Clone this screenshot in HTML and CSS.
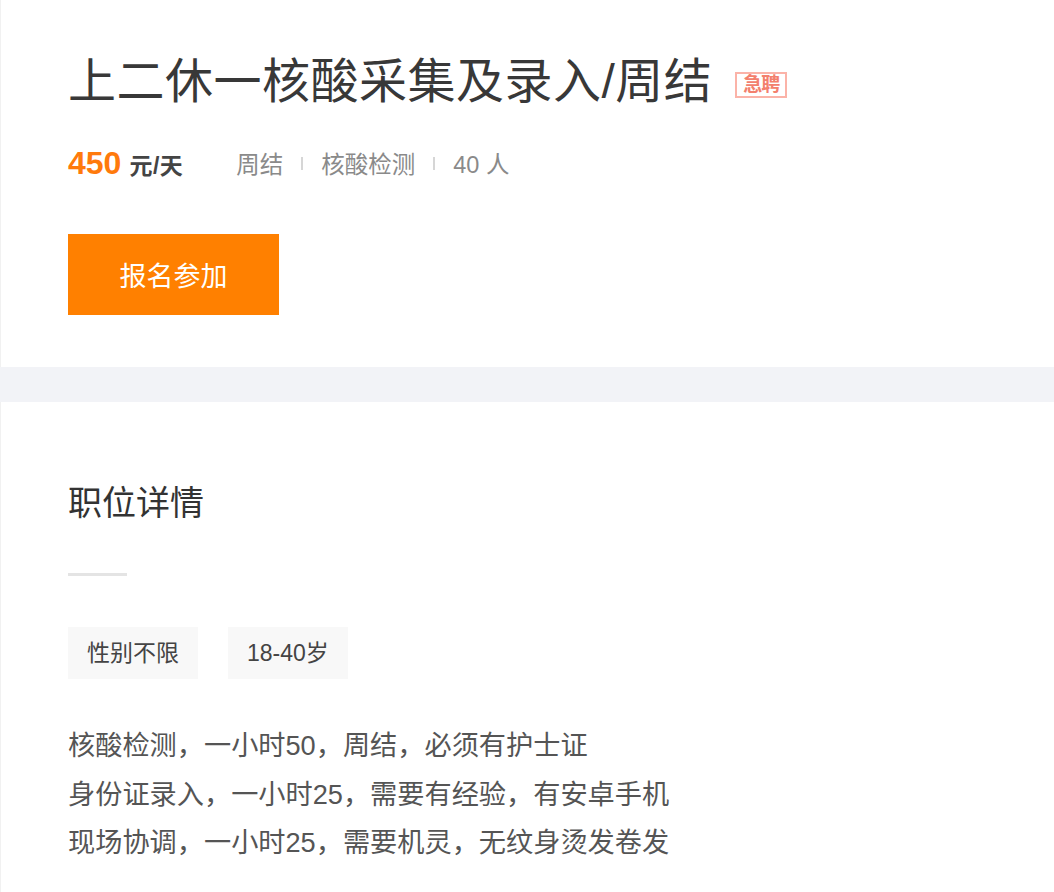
FILE: index.html
```html
<!DOCTYPE html>
<html lang="zh-CN">
<head>
<meta charset="utf-8">
<title>上二休一核酸采集及录入/周结</title>
<link rel="stylesheet" href="styles.css">
</head>
<body>
<div class="page">
  <section class="job-head">
    <div class="title-row">
      <h1 class="job-title">上二休一核酸采集及录入/周结</h1>
      <span class="urgent">急聘</span>
    </div>
    <div class="meta-row">
      <span class="salary"><b class="salary-num">450</b><span class="salary-unit">元/天</span></span>
      <ul class="meta">
        <li>周结</li>
        <li>核酸检测</li>
        <li>40 人</li>
      </ul>
    </div>
    <button class="apply" type="button">报名参加</button>
  </section>
  <div class="band"></div>
  <section class="detail">
    <h2 class="detail-title">职位详情</h2>
    <div class="rule"></div>
    <div class="tags">
      <span class="tag">性别不限</span>
      <span class="tag">18-40岁</span>
    </div>
    <div class="desc">
      <p>核酸检测，一小时50，周结，必须有护士证</p>
      <p>身份证录入，一小时25，需要有经验，有安卓手机</p>
      <p>现场协调，一小时25，需要机灵，无纹身烫发卷发</p>
    </div>
  </section>
</div>
</body>
</html>
```

FILE: styles.css
```css
* { box-sizing: border-box; }
html, body { margin: 0; padding: 0; background: #fff; }
body {
  font-family: "Liberation Sans", "Noto Sans CJK SC", sans-serif;
  color: #333;
}
.page { width: 1054px; }

.job-head {
  padding: 54px 0 52px 67px;
  border-left: 1px solid #f1f1f1;
}
.title-row {
  display: flex;
  align-items: center;
  height: 56px;
}
.job-title {
  margin: 0;
  font-size: 48px;
  line-height: 56px;
  font-weight: 400;
  color: #383838;
  letter-spacing: 0.5px;
}
.urgent {
  margin-left: 23px;
  margin-top: 6px;
  width: 52px;
  height: 26px;
  border: 2px solid #fbb3a8;
  color: #f3806d;
  font-size: 19px;
  font-weight: 700;
  line-height: 22px;
  text-align: center;
  letter-spacing: -1px;
}

.meta-row {
  margin-top: 36px;
  height: 34px;
  display: flex;
  align-items: center;
}
.salary { display: flex; align-items: baseline; }
.salary-num {
  font-size: 32px;
  font-weight: 700;
  color: #ff7a0c;
}
.salary-unit {
  margin-left: 8px;
  font-size: 23px;
  color: #444;
  font-weight: 700;
  letter-spacing: 0.5px;
}
.meta {
  display: flex;
  align-items: center;
  margin: 0 0 0 53px;
  padding: 0;
  list-style: none;
  font-size: 23.5px;
  color: #8a8a8a;
}
.meta li { display: flex; align-items: center; }
.meta li + li::before {
  content: "";
  display: block;
  width: 2px;
  height: 13px;
  background: #d6d6d6;
  margin: 0 18px;
}

.apply {
  display: block;
  margin-top: 54px;
  width: 211px;
  height: 81px;
  border: 0;
  border-radius: 0;
  background: #ff8000;
  color: #fff;
  font-family: inherit;
  font-size: 27px;
  padding: 0;
  cursor: pointer;
}

.band {
  height: 35px;
  background: #f2f3f7;
}

.detail {
  padding: 79px 0 0 67px;
  border-left: 1px solid #f1f1f1;
  height: 490px;
}
.detail-title {
  margin: 0;
  font-size: 34px;
  line-height: 44px;
  font-weight: 400;
  color: #333;
}
.rule {
  margin-top: 48px;
  width: 59px;
  height: 3px;
  background: #e4e4e4;
}
.tags {
  margin-top: 51px;
  display: flex;
  gap: 30px;
}
.tag {
  height: 52px;
  padding: 0 19px;
  background: #f8f8f8;
  font-size: 23px;
  line-height: 52px;
  color: #444;
}
.desc { margin-top: 43px; }
.desc p {
  margin: 0;
  font-size: 27.2px;
  line-height: 48.5px;
  color: #555;
}
```
